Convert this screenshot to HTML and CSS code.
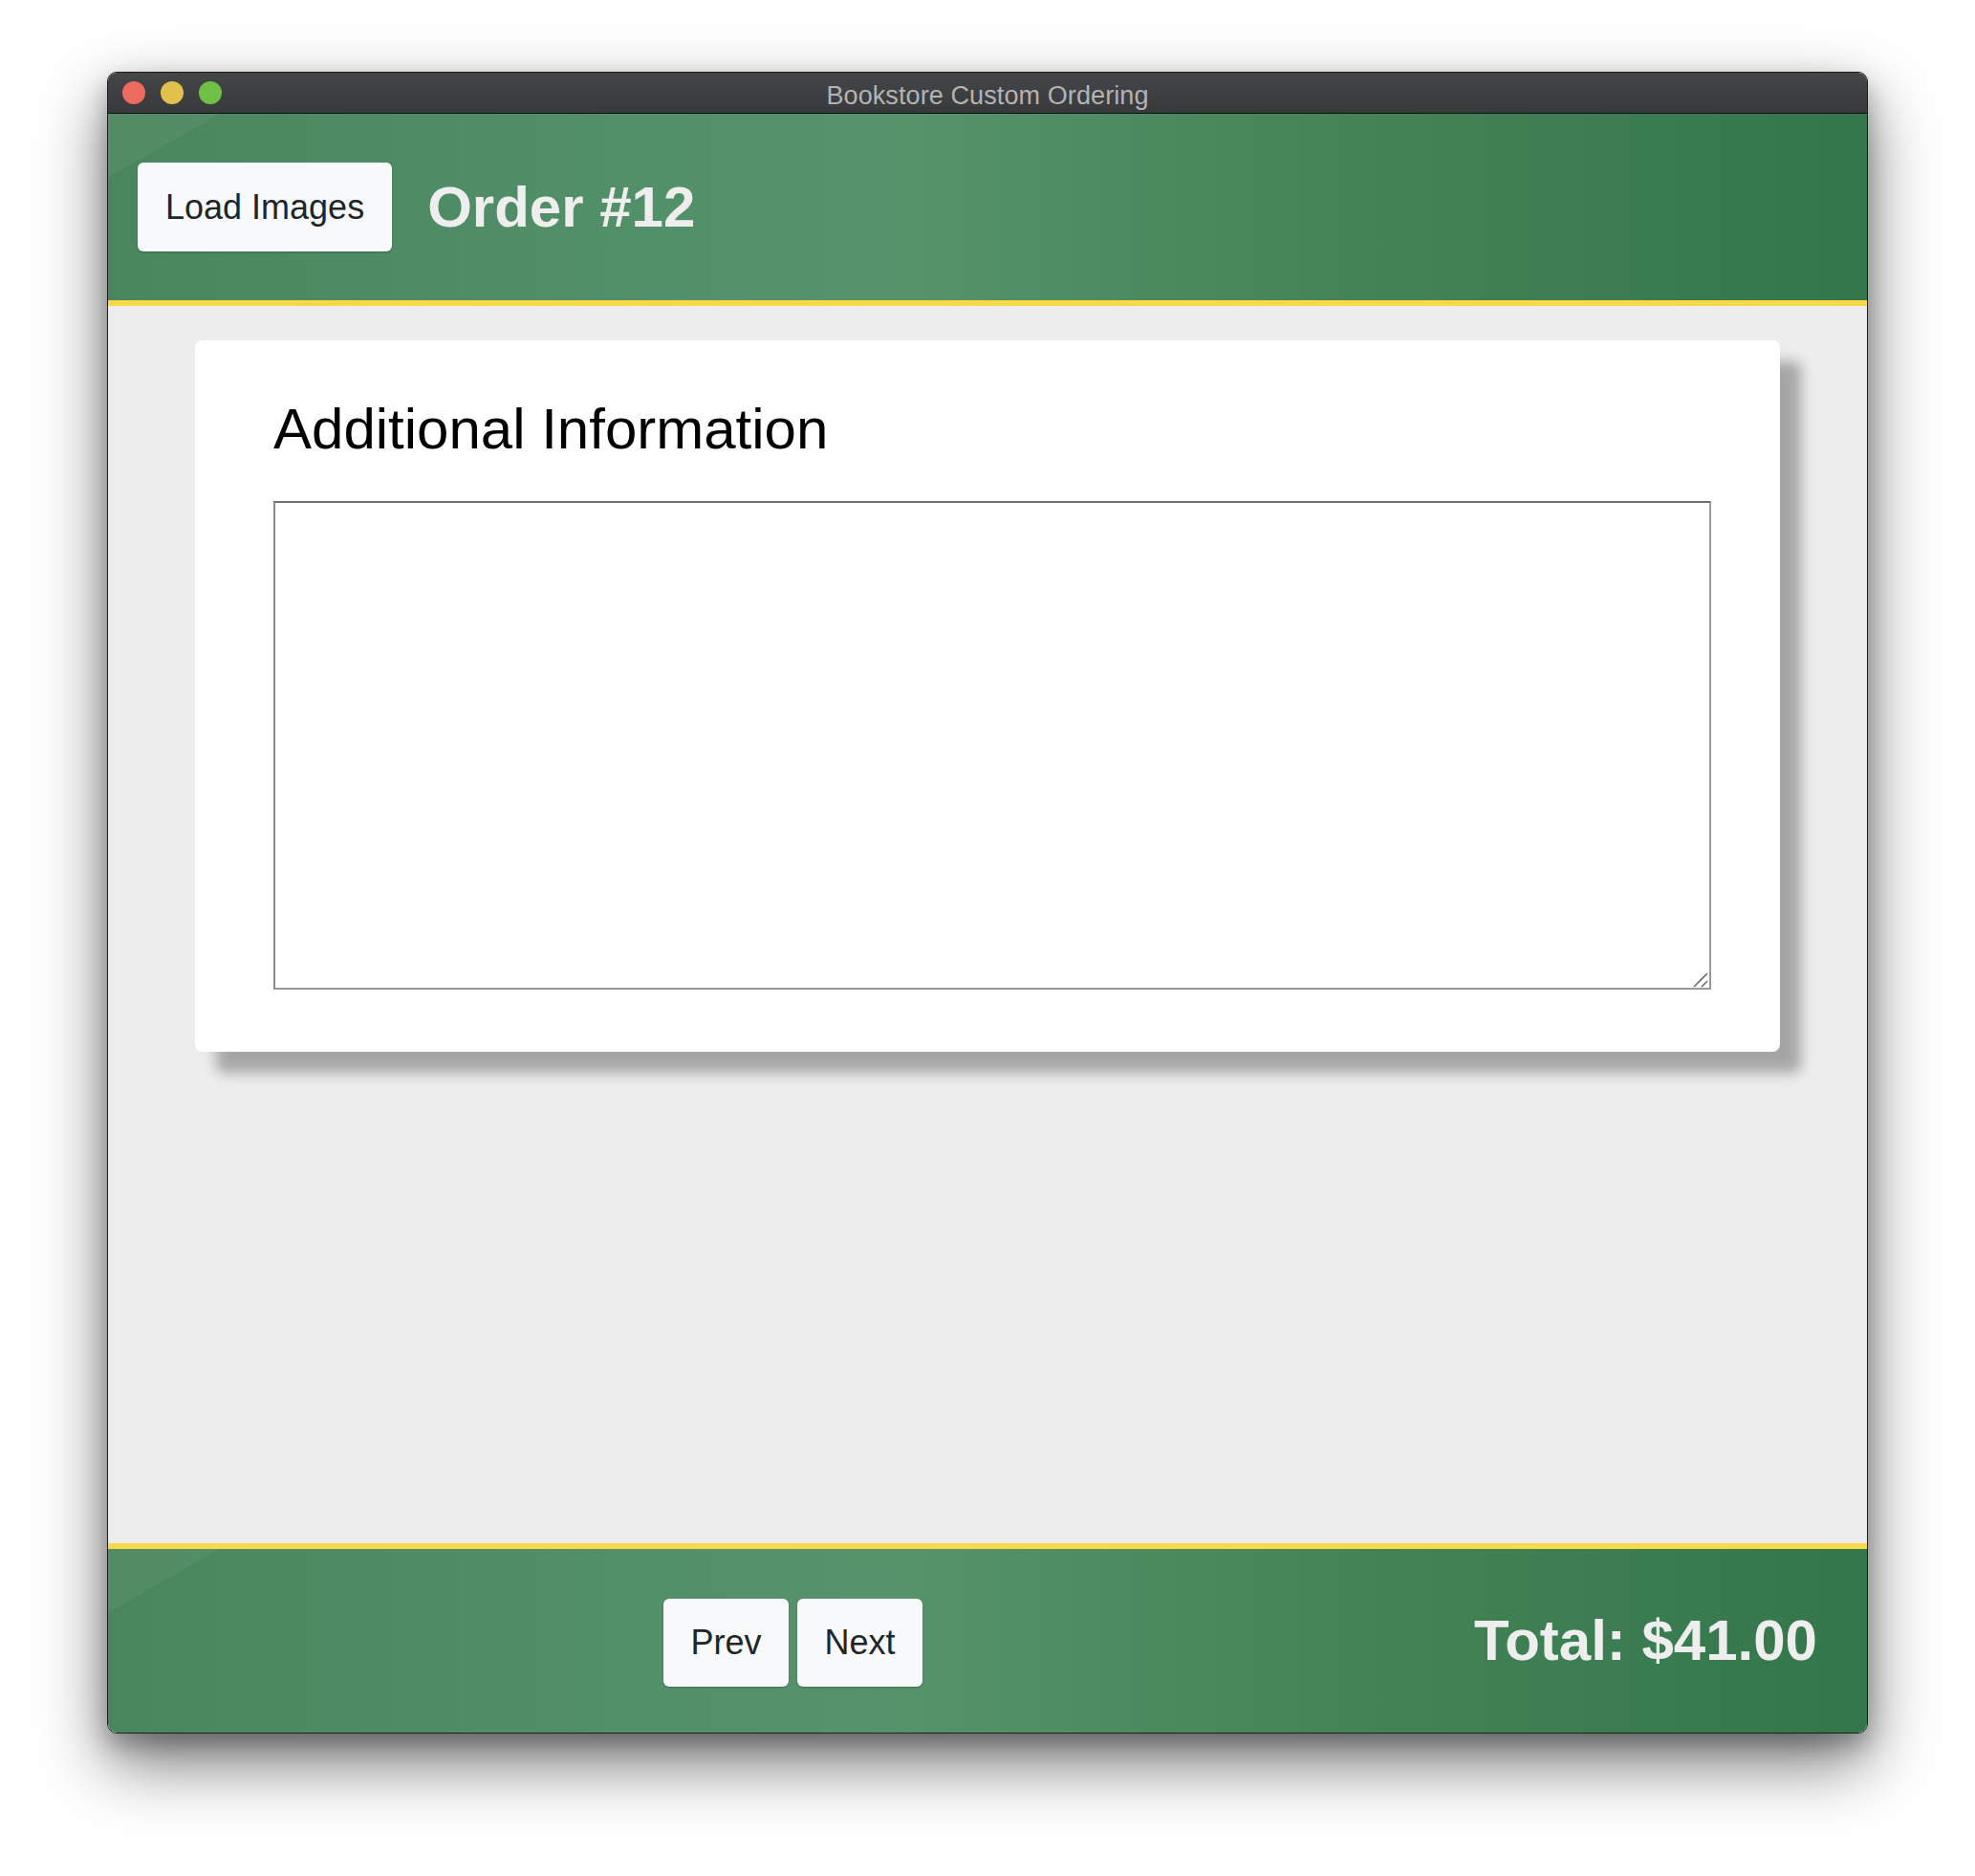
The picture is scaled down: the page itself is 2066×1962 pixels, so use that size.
FILE: index.html
```html
<!DOCTYPE html>
<html lang="en">
<head>
<meta charset="utf-8">
<title>Bookstore Custom Ordering</title>
<link rel="stylesheet" href="styles.css">
</head>
<body>
<div class="window">
  <div class="titlebar">
    <div class="lights">
      <span class="light light-red"></span>
      <span class="light light-yellow"></span>
      <span class="light light-green"></span>
    </div>
    <div class="title">Bookstore Custom Ordering</div>
  </div>
  <header class="header">
    <button class="btn btn-load">Load Images</button>
    <h1 class="order">Order #12</h1>
  </header>
  <main class="content">
    <section class="card">
      <h2 class="card-title">Additional Information</h2>
      <div class="ta-wrap">
        <textarea class="notes"></textarea>
        <svg class="grip" width="18" height="18" viewBox="0 0 18 18" aria-hidden="true">
          <line x1="16" y1="3" x2="2" y2="17" stroke="#6a6a6a" stroke-width="1.6"/>
          <line x1="16" y1="11" x2="10" y2="17" stroke="#6a6a6a" stroke-width="1.6"/>
        </svg>
      </div>
    </section>
  </main>
  <footer class="footer">
    <div class="nav">
      <button class="btn btn-nav">Prev</button>
      <button class="btn btn-nav">Next</button>
    </div>
    <div class="total">Total: $41.00</div>
  </footer>
</div>
</body>
</html>
```

FILE: styles.css
```css
html, body {
  margin: 0;
  padding: 0;
  background: #ffffff;
}

body {
  font-family: "Liberation Sans", Arial, sans-serif;
  width: 2066px;
  height: 1962px;
  overflow: hidden;
}

.window {
  box-sizing: border-box;
  margin: 75px 0 0 112px;
  width: 1842px;
  height: 1738px;
  border: 1px solid #1d1d1d;
  border-radius: 10px;
  overflow: hidden;
  display: flex;
  flex-direction: column;
  box-shadow: 0 30px 70px rgba(0, 0, 0, 0.55), 0 12px 24px rgba(0, 0, 0, 0.25);
}

.titlebar {
  height: 42px;
  flex: none;
  border-bottom: 1px solid #111;
  background: linear-gradient(#454648, #38393b);
  display: grid;
  grid-template-columns: 1fr auto 1fr;
  align-items: center;
}

.lights {
  display: flex;
  gap: 16px;
  padding-left: 15px;
}

.light {
  width: 24px;
  height: 24px;
  border-radius: 50%;
  display: block;
}

.light-red { background: #ed6a5e; }
.light-yellow { background: #e1c14c; }
.light-green { background: #70bf47; }

.title {
  font-size: 27px;
  color: #b3b3b3;
  letter-spacing: 0.1px;
  padding-top: 6px;
}

.header,
.footer {
  flex: none;
  display: flex;
  align-items: center;
  background:
    linear-gradient(to bottom right, rgba(255, 255, 255, 0.045) 50%, rgba(255, 255, 255, 0) 50%) no-repeat 0 0 / 116px 67px,
    linear-gradient(90deg, #4a865d 0%, #52906a 30%, #56936b 45%, #478759 65%, #3d7f52 82%, #33764a 100%);
}

.header {
  height: 195px;
  border-bottom: 6px solid #f8da48;
  padding-left: 31px;
}

.btn {
  font-family: "Liberation Sans", Arial, sans-serif;
  font-size: 36px;
  color: #212529;
  background: #f8f9fa;
  border: none;
  border-radius: 6px;
  padding: 0 29px;
  box-shadow: 0 1px 2px rgba(0, 0, 0, 0.25);
  cursor: pointer;
}

.btn-load {
  height: 93px;
}

.order {
  margin: 0 0 0 37px;
  font-size: 60px;
  font-weight: bold;
  color: #eeeeee;
  line-height: 1;
}

.content {
  flex: 1;
  background: #ededed;
  padding: 36px 91px 0;
}

.card {
  background: #ffffff;
  border-radius: 8px;
  height: 744px;
  box-sizing: border-box;
  padding: 63px 72px 0 82px;
  box-shadow: 22px 22px 14px rgba(0, 0, 0, 0.3);
}

.card-title {
  margin: 0 0 45px;
  font-size: 60px;
  line-height: 60px;
  font-weight: normal;
  color: #000;
}

.ta-wrap {
  position: relative;
  height: 511px;
}

.notes {
  display: block;
  box-sizing: border-box;
  width: 100%;
  height: 511px;
  margin: 0;
  resize: none;
  background: #fff;
  border-style: solid;
  border-width: 2px;
  border-color: #707070 #9a9a9a #9a9a9a #8a8a8a;
  outline: none;
}

.grip {
  position: absolute;
  right: 2px;
  bottom: 2px;
}

.footer {
  height: 192px;
  border-top: 6px solid #f8da48;
}

.nav {
  display: flex;
  gap: 9px;
  margin-left: 581px;
  margin-top: 4px;
}

.btn-nav {
  height: 92px;
  width: 131px;
  padding: 0;
}

.total {
  margin-left: auto;
  padding-right: 52px;
  font-size: 60px;
  font-weight: bold;
  color: #eeeeee;
  line-height: 1;
}
```
